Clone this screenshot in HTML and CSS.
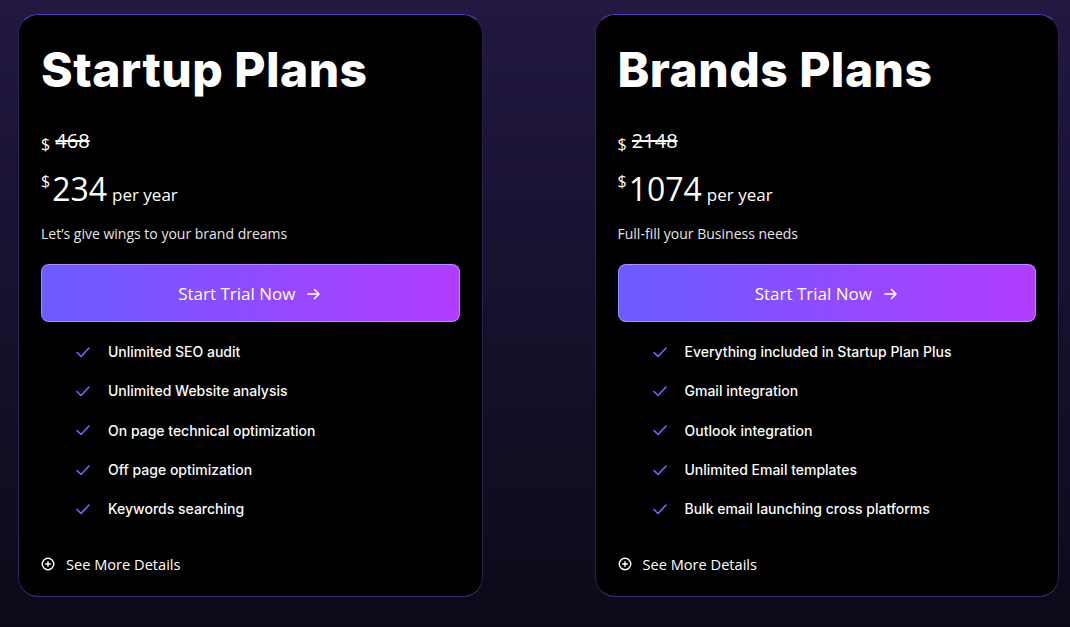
FILE: index.html
```html
<!DOCTYPE html>
<html lang="en">
<head>
<meta charset="utf-8">
<title>Plans</title>
<link rel="stylesheet" href="styles.css">
</head>
<body>
<main class="plans">
  <section class="card">
    <h2 class="title">Startup Plans</h2>
    <div class="old-price"><span class="cur">$</span> <s>468</s></div>
    <div class="price"><sup class="cur-big">$</sup><span class="amount">234</span> <span class="per">per year</span></div>
    <p class="desc">Let’s give wings to your brand dreams</p>
    <button class="cta">Start Trial Now <svg class="arrow" viewBox="0 0 16 16" width="16" height="16"><path d="M2 8h11M8.5 3.5 13 8l-4.5 4.5" fill="none" stroke="#fff" stroke-width="1.6" stroke-linecap="round" stroke-linejoin="round"/></svg></button>
    <ul class="features">
      <li><svg class="check" viewBox="0 0 16 16" width="16" height="16"><path d="M2 8.5l4 4L14 4" fill="none" stroke="#8a5cff" stroke-width="1.6" stroke-linecap="round" stroke-linejoin="round"/></svg>Unlimited SEO audit</li>
      <li><svg class="check" viewBox="0 0 16 16" width="16" height="16"><path d="M2 8.5l4 4L14 4" fill="none" stroke="#8a5cff" stroke-width="1.6" stroke-linecap="round" stroke-linejoin="round"/></svg>Unlimited Website analysis</li>
      <li><svg class="check" viewBox="0 0 16 16" width="16" height="16"><path d="M2 8.5l4 4L14 4" fill="none" stroke="#8a5cff" stroke-width="1.6" stroke-linecap="round" stroke-linejoin="round"/></svg>On page technical optimization</li>
      <li><svg class="check" viewBox="0 0 16 16" width="16" height="16"><path d="M2 8.5l4 4L14 4" fill="none" stroke="#8a5cff" stroke-width="1.6" stroke-linecap="round" stroke-linejoin="round"/></svg>Off page optimization</li>
      <li><svg class="check" viewBox="0 0 16 16" width="16" height="16"><path d="M2 8.5l4 4L14 4" fill="none" stroke="#8a5cff" stroke-width="1.6" stroke-linecap="round" stroke-linejoin="round"/></svg>Keywords searching</li>
    </ul>
    <a class="more" href="#"><svg class="plus" viewBox="0 0 16 16" width="14" height="14"><circle cx="8" cy="8" r="6.6" fill="none" stroke="#fff" stroke-width="1.6"/><path d="M8 5.4v5.2M5.4 8h5.2" stroke="#fff" stroke-width="1.6" stroke-linecap="round"/></svg>See More Details</a>
  </section>
  <section class="card">
    <h2 class="title">Brands Plans</h2>
    <div class="old-price"><span class="cur">$</span> <s>2148</s></div>
    <div class="price"><sup class="cur-big">$</sup><span class="amount">1074</span> <span class="per">per year</span></div>
    <p class="desc">Full-fill your Business needs</p>
    <button class="cta">Start Trial Now <svg class="arrow" viewBox="0 0 16 16" width="16" height="16"><path d="M2 8h11M8.5 3.5 13 8l-4.5 4.5" fill="none" stroke="#fff" stroke-width="1.6" stroke-linecap="round" stroke-linejoin="round"/></svg></button>
    <ul class="features">
      <li><svg class="check" viewBox="0 0 16 16" width="16" height="16"><path d="M2 8.5l4 4L14 4" fill="none" stroke="#8a5cff" stroke-width="1.6" stroke-linecap="round" stroke-linejoin="round"/></svg>Everything included in Startup Plan Plus</li>
      <li><svg class="check" viewBox="0 0 16 16" width="16" height="16"><path d="M2 8.5l4 4L14 4" fill="none" stroke="#8a5cff" stroke-width="1.6" stroke-linecap="round" stroke-linejoin="round"/></svg>Gmail integration</li>
      <li><svg class="check" viewBox="0 0 16 16" width="16" height="16"><path d="M2 8.5l4 4L14 4" fill="none" stroke="#8a5cff" stroke-width="1.6" stroke-linecap="round" stroke-linejoin="round"/></svg>Outlook integration</li>
      <li><svg class="check" viewBox="0 0 16 16" width="16" height="16"><path d="M2 8.5l4 4L14 4" fill="none" stroke="#8a5cff" stroke-width="1.6" stroke-linecap="round" stroke-linejoin="round"/></svg>Unlimited Email templates</li>
      <li><svg class="check" viewBox="0 0 16 16" width="16" height="16"><path d="M2 8.5l4 4L14 4" fill="none" stroke="#8a5cff" stroke-width="1.6" stroke-linecap="round" stroke-linejoin="round"/></svg>Bulk email launching cross platforms</li>
    </ul>
    <a class="more" href="#"><svg class="plus" viewBox="0 0 16 16" width="14" height="14"><circle cx="8" cy="8" r="6.6" fill="none" stroke="#fff" stroke-width="1.6"/><path d="M8 5.4v5.2M5.4 8h5.2" stroke="#fff" stroke-width="1.6" stroke-linecap="round"/></svg>See More Details</a>
  </section>
</main>
</body>
</html>
```

FILE: styles.css
```css
html, body {
  margin: 0;
  height: 100%;
}
body {
  background: linear-gradient(180deg, #221841 0%, #18112f 45%, #0c0a18 100%);
  font-family: "Open Sans", "Noto Sans", sans-serif;
  color: #fff;
  overflow: hidden;
}
.plans {
  display: flex;
  gap: 112px;
  padding: 14px 11px 0 18px;
}
.card {
  box-sizing: border-box;
  width: 465px;
  height: 583px;
  background: #000;
  border-radius: 20px;
  border: 1px solid #2a1f52;
  border-top-color: #5b3fb8;
  border-bottom-color: #3a2a78;
  padding: 0 22px;
  display: flex;
  flex-direction: column;
}
.title {
  font-family: "Inter", "Noto Sans", sans-serif;
  font-weight: 800;
  font-size: 48px;
  letter-spacing: 0.45px;
  line-height: 56px;
  margin: 27px 0 0;
}
.old-price {
  margin-top: 29px;
  font-size: 20px;
  line-height: 28px;
}
.old-price .cur {
  font-size: 16px;
  vertical-align: -2px;
}
.old-price s {
  text-decoration-thickness: 1.5px;
}
.price {
  margin-top: 11px;
  line-height: 40px;
  display: flex;
  align-items: baseline;
}
.cur-big {
  font-size: 16px;
  align-self: flex-start;
  line-height: 24px;
  margin-right: 2px;
}
.amount {
  font-size: 32px;
  font-weight: 400;
}
.per {
  font-size: 17px;
  margin-left: 5px;
}
.desc {
  margin: 9px 0 0;
  font-size: 14px;
  line-height: 20px;
  color: #e4e4e4;
}
.cta {
  margin-top: 20px;
  height: 58px;
  width: 100%;
  border-radius: 8px;
  border: 1px solid #b58dff;
  border-left-color: #9a8bff;
  background: linear-gradient(90deg, #6a5cff 0%, #8f4cff 50%, #b13dff 100%);
  color: #fff;
  font-family: "Open Sans", "Noto Sans", sans-serif;
  font-size: 17px;
  font-weight: 500;
  display: flex;
  align-items: center;
  justify-content: center;
  gap: 11px;
  cursor: pointer;
}
.arrow {
  margin-top: 1px;
}
.features {
  list-style: none;
  margin: 10px 0 0;
  padding: 0 0 0 34px;
}
.features li {
  display: flex;
  align-items: center;
  gap: 17px;
  height: 39.3px;
  font-family: "Inter", "Lato", sans-serif;
  font-size: 14px;
  font-weight: 500;
  color: #fafafa;
}
.check {
  flex: none;
}
.more {
  margin-top: 26px;
  display: flex;
  align-items: center;
  gap: 11px;
  color: #fff;
  text-decoration: none;
  font-size: 14.6px;
  font-weight: 500;
}
```
